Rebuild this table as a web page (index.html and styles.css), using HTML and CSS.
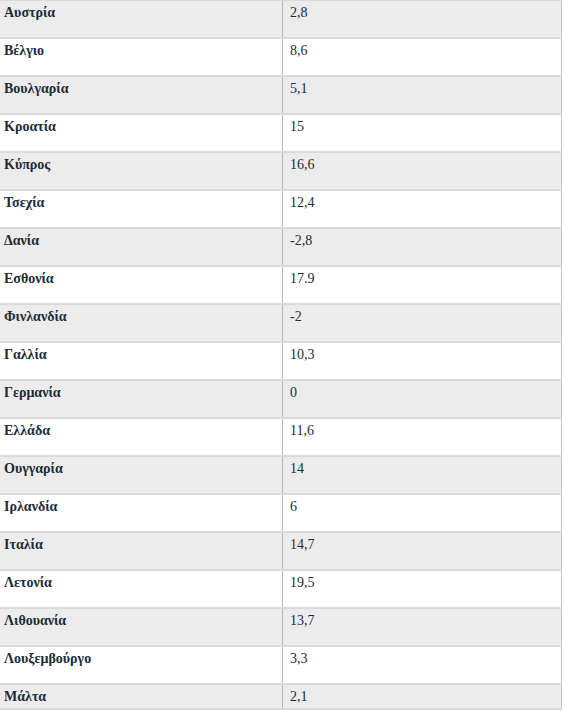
FILE: index.html
```html
<!DOCTYPE html>
<html lang="el">
<head>
<meta charset="utf-8">
<link rel="stylesheet" href="styles.css">
</head>
<body>
<table class="data">
<tbody>
<tr class="odd"><td class="name">Αυστρία</td><td class="val">2,8</td></tr>
<tr class="even"><td class="name">Βέλγιο</td><td class="val">8,6</td></tr>
<tr class="odd"><td class="name">Βουλγαρία</td><td class="val">5,1</td></tr>
<tr class="even"><td class="name">Κροατία</td><td class="val">15</td></tr>
<tr class="odd"><td class="name">Κύπρος</td><td class="val">16,6</td></tr>
<tr class="even"><td class="name">Τσεχία</td><td class="val">12,4</td></tr>
<tr class="odd"><td class="name">Δανία</td><td class="val">-2,8</td></tr>
<tr class="even"><td class="name">Εσθονία</td><td class="val">17.9</td></tr>
<tr class="odd"><td class="name">Φινλανδία</td><td class="val">-2</td></tr>
<tr class="even"><td class="name">Γαλλία</td><td class="val">10,3</td></tr>
<tr class="odd"><td class="name">Γερμανία</td><td class="val">0</td></tr>
<tr class="even"><td class="name">Ελλάδα</td><td class="val">11,6</td></tr>
<tr class="odd"><td class="name">Ουγγαρία</td><td class="val">14</td></tr>
<tr class="even"><td class="name">Ιρλανδία</td><td class="val">6</td></tr>
<tr class="odd"><td class="name">Ιταλία</td><td class="val">14,7</td></tr>
<tr class="even"><td class="name">Λετονία</td><td class="val">19,5</td></tr>
<tr class="odd"><td class="name">Λιθουανία</td><td class="val">13,7</td></tr>
<tr class="even"><td class="name">Λουξεμβούργο</td><td class="val">3,3</td></tr>
<tr class="odd last"><td class="name">Μάλτα</td><td class="val">2,1</td></tr>
</tbody>
</table>
</body>
</html>
```
FILE: styles.css
```css
html, body {
  margin: 0;
  padding: 0;
  background: #ffffff;
}
.data {
  border-collapse: collapse;
  width: 562px;
  font-family: "Liberation Serif", "Times New Roman", serif;
  font-size: 14px;
  color: #1b2b38;
  border-right: 1px solid #c4c4c4;
  margin-top: -1px;
}
.data tr {
  height: 38px;
}
.data tr.last {
  height: 25px;
}
.data td {
  vertical-align: top;
  padding: 4px 6px 0 4px;
  border-top: 2px solid #dadada;
  border-bottom: 0;
  line-height: 16px;
}
.data tr.last td {
  border-bottom: 2px solid #dadada;
}
.data .odd td {
  background: #ececec;
}
.data .even td {
  background: #ffffff;
}
.data td.name {
  width: 272px;
  font-weight: bold;
  border-right: 1px solid #b8b8b8;
}
.data td.val {
  padding-left: 7px;
}
```
